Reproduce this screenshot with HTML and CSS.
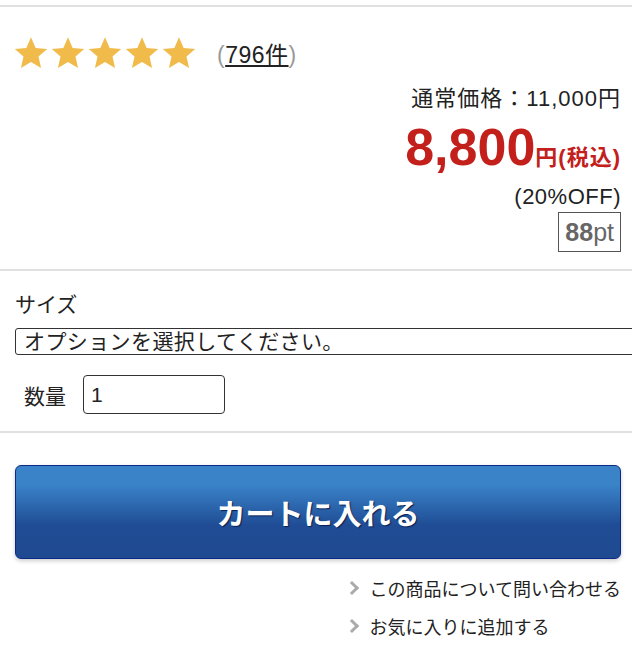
FILE: index.html
```html
<!DOCTYPE html>
<html lang="ja">
  <head>
    <meta charset="UTF-8" />
    <meta name="viewport" content="width=device-width, initial-scale=1.0" />
    <title>商品詳細</title>
    <link rel="stylesheet" href="styles.css">
  </head>
  <body>
    <div class="rule top"></div>

    <!-- review + price -->
    <div class="section price-box">
      <div class="review">
        <div class="stars">
          <svg viewBox="0 0 24 24"><polygon points="12,1.5 15.1,8.6 22.8,9.3 17,14.4 18.7,22 12,18 5.3,22 7,14.4 1.2,9.3 8.9,8.6" /></svg>
          <svg viewBox="0 0 24 24"><polygon points="12,1.5 15.1,8.6 22.8,9.3 17,14.4 18.7,22 12,18 5.3,22 7,14.4 1.2,9.3 8.9,8.6" /></svg>
          <svg viewBox="0 0 24 24"><polygon points="12,1.5 15.1,8.6 22.8,9.3 17,14.4 18.7,22 12,18 5.3,22 7,14.4 1.2,9.3 8.9,8.6" /></svg>
          <svg viewBox="0 0 24 24"><polygon points="12,1.5 15.1,8.6 22.8,9.3 17,14.4 18.7,22 12,18 5.3,22 7,14.4 1.2,9.3 8.9,8.6" /></svg>
          <svg viewBox="0 0 24 24"><polygon points="12,1.5 15.1,8.6 22.8,9.3 17,14.4 18.7,22 12,18 5.3,22 7,14.4 1.2,9.3 8.9,8.6" /></svg>
        </div>
        <span class="count"><span class="paren">(</span><a href="#">796件</a><span class="paren">)</span></span>
      </div>

      <div class="prices">
        <div class="regular">通常価格：11,000円</div>
        <div class="sale"><span class="amount">8,800</span><span class="unit">円(税込)</span></div>
        <div class="off">(20%OFF)</div>
        <div class="points"><b>88</b>pt</div>
      </div>
    </div>

    <div class="rule"></div>

    <!-- options -->
    <div class="section options">
      <div class="label">サイズ</div>
      <select class="option-select">
        <option>オプションを選択してください。</option>
      </select>
      <div class="qty">
        <span>数量</span>
        <input type="text" value="1" />
      </div>
    </div>

    <div class="rule"></div>

    <div class="section cart">
      <button class="cart-btn">カートに入れる</button>
      <ul class="links">
        <li><a href="#">この商品について問い合わせる</a></li>
        <li><a href="#">お気に入りに追加する</a></li>
      </ul>
    </div>
  </body>
</html>
```

FILE: styles.css
```css
body {
  margin: 0;
  font-family: "Liberation Sans", "Noto Sans CJK JP", sans-serif;
  color: #222;
  background-color: #fff;
  overflow-x: hidden;
}

.rule {
  height: 2px;
  background-color: #e0e0e0;
}

.rule.top {
  margin-top: 5px;
}

.section {
  padding: 0 11px 0 15px;
}

/* review row */
.review {
  display: flex;
  align-items: center;
  gap: 20px;
  padding-top: 28px;
}

.stars {
  display: flex;
  gap: 1px;
  margin-left: -2px;
}

.stars svg {
  width: 36px;
  height: 36px;
  fill: #f0bb4a;
}

.count {
  font-size: 23px;
  letter-spacing: 0.5px;
}

.count .paren {
  color: #999;
}

.count a {
  color: #222;
  text-decoration: underline;
}

/* prices */
.prices {
  display: flex;
  flex-direction: column;
  align-items: flex-end;
  padding-bottom: 17px;
  white-space: nowrap;
}

.regular {
  font-size: 22px;
  letter-spacing: 1px;
  margin-top: 14px;
  line-height: 28px;
}

.sale {
  color: #c3201c;
  font-weight: bold;
  line-height: 56px;
  margin-top: 6px;
}

.sale .amount {
  font-size: 52px;
}

.sale .unit {
  font-size: 22px;
  letter-spacing: 1px;
}

.off {
  font-size: 22px;
  letter-spacing: 0.5px;
  line-height: 28px;
  margin-top: -5px;
}

.points {
  margin-top: 1px;
  border: 1px solid #555;
  padding: 0 6px;
  height: 38px;
  line-height: 38px;
  font-size: 25px;
  color: #666;
}

.points b {
  font-weight: bold;
}

/* options */
.options {
  padding-top: 20px;
  padding-bottom: 17px;
}

.label {
  font-size: 21px;
  line-height: 28px;
}

.option-select {
  appearance: none;
  display: block;
  margin-top: 9px;
  width: 640px;
  height: 27px;
  padding: 0 8px;
  border: 1px solid #333;
  border-radius: 3px;
  background: #fff;
  font-family: inherit;
  font-size: 21px;
  letter-spacing: 0.4px;
  color: #222;
}

.qty {
  display: flex;
  align-items: center;
  gap: 17px;
  margin-top: 20px;
  padding-left: 9px;
  font-size: 21px;
}

.qty input {
  width: 126px;
  height: 37px;
  padding: 0 7px;
  border: 1px solid #333;
  border-radius: 4px;
  font-family: inherit;
  font-size: 21px;
  color: #222;
}

/* cart */
.cart {
  padding-top: 32px;
}

.cart-btn {
  display: block;
  width: 100%;
  height: 94px;
  border: 1px solid #0b2a86;
  border-radius: 6px;
  background: linear-gradient(#3a83c9 0%, #3a83c9 20%, #1f4c94 65%, #1f4a92 100%);
  color: #fff;
  font-family: inherit;
  font-size: 29px;
  font-weight: bold;
  text-shadow: 1px 1px 1px #0a1f50;
  box-shadow: 0 2px 4px rgba(0, 0, 0, 0.2);
  cursor: pointer;
}

.links {
  list-style: none;
  margin: 17px 0 0 auto;
  padding: 0;
  width: fit-content;
  display: flex;
  flex-direction: column;
  align-items: flex-start;
  gap: 10px;
}

.links li {
  font-size: 18px;
  line-height: 28px;
}

.links a {
  color: #222;
  text-decoration: none;
}

.links a::before {
  content: "";
  display: inline-block;
  width: 7px;
  height: 7px;
  border-top: 3px solid #aaa;
  border-right: 3px solid #aaa;
  transform: rotate(45deg);
  margin-right: 13px;
  vertical-align: 3px;
}
```
